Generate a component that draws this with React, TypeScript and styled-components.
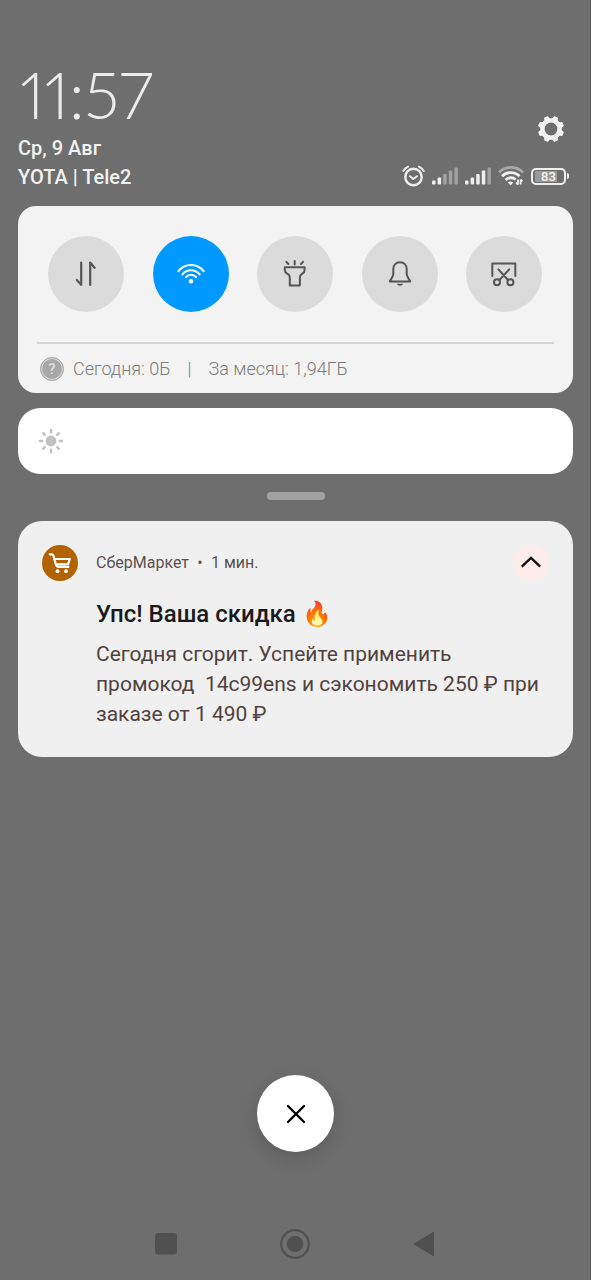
import React from 'react';
import styled, { createGlobalStyle } from 'styled-components';

const GlobalStyle = createGlobalStyle`
  *, *::before, *::after { box-sizing: border-box; }
  body {
    margin: 0;
    background: #6e6e6e;
    font-family: Roboto, "Noto Sans", sans-serif;
  }
  button { padding: 0; border: 0; background: none; font: inherit; cursor: pointer; }
  h2, p { margin: 0; }
  svg { display: block; }
`;

const Screen = styled.div`
  display: flex;
  flex-direction: column;
  min-height: 100vh;
  padding: 64px 17px 0 18px;
  border-right: 1px solid #5c5c5c;
  background: #6e6e6e;
`;

const Header = styled.header`
  display: flex;
  justify-content: space-between;
  align-items: flex-end;
  padding-bottom: 14px;
  color: #f2f2f2;
`;

const HeaderSide = styled.div<{ $end?: boolean }>`
  display: flex;
  flex-direction: column;
  align-items: ${p => (p.$end ? 'flex-end' : 'flex-start')};
`;

const Clock = styled.time`
  margin-bottom: 10px;
  padding-left: 2px;
  font-family: Lato, Roboto, sans-serif;
  font-size: 65px;
  line-height: 60px;
  font-weight: 300;
  font-feature-settings: "pnum";
  color: #ececec;
`;

const HeaderLine = styled.span`
  font-size: 20px;
  line-height: 29px;
  font-weight: 500;
`;

const SettingsButton = styled.button`
  margin: 0 8px 17px 0;
  color: #f2f2f2;
`;

const StatusRow = styled.div`
  display: flex;
  align-items: center;
  gap: 7px;
  height: 32px;
  padding-right: 4px;
`;

const Battery = styled.span`
  display: flex;
  align-items: center;
  gap: 1px;
`;

const BatteryBody = styled.span`
  width: 35px;
  height: 17px;
  border: 2px solid #efefef;
  border-radius: 5px;
  background: linear-gradient(90deg, #9a9a9a 80%, transparent 80%) content-box;
  padding: 1px 2px;
  font-size: 13px;
  line-height: 12px;
  font-weight: 500;
  text-align: center;
`;

const BatteryTip = styled.span`
  width: 2px;
  height: 6px;
  border-radius: 0 2px 2px 0;
  background: #efefef;
`;

const QuickPanel = styled.section`
  border-radius: 18px;
  background: #f3f3f3;
`;

const Tiles = styled.div`
  display: flex;
  justify-content: space-between;
  padding: 30px 31px 30px 30px;
`;

const Tile = styled.button<{ $active?: boolean }>`
  display: grid;
  place-items: center;
  width: 76px;
  height: 76px;
  border-radius: 50%;
  background: ${p => (p.$active ? '#0099ff' : '#dbdbdb')};
  color: ${p => (p.$active ? '#ffffff' : '#555555')};
`;

const DataUsage = styled.div`
  display: flex;
  align-items: center;
  height: 51px;
  margin: 0 19px;
  padding-left: 3px;
  border-top: 2px solid #d6d6d6;
  font-size: 18px;
  line-height: 20px;
  font-weight: 300;
  color: #7c7c7c;
`;

const HelpBadge = styled.button`
  width: 24px;
  height: 24px;
  margin-right: 9px;
  border: 1px solid #a8a8a8;
  border-radius: 50%;
  background: #a8a8a8;
  box-shadow: inset 0 0 0 1px #dcdcdc;
  font-size: 14px;
  line-height: 20px;
  font-weight: 500;
  color: #e0e0e0;
`;

const Separator = styled.span`
  width: 38px;
  text-align: center;
`;

const Brightness = styled.label`
  display: flex;
  align-items: center;
  gap: 16px;
  height: 66px;
  margin-top: 15px;
  padding: 0 20px;
  border-radius: 22px;
  background: #ffffff;
  color: #c1c1c1;
`;

const BrightnessRange = styled.input`
  flex: 1;
  height: 40px;
  margin: 0;
  appearance: none;
  background: transparent;
  &::-webkit-slider-thumb { appearance: none; width: 24px; height: 40px; background: transparent; }
`;

const Handle = styled.div`
  width: 58px;
  height: 8px;
  margin: 18px auto 21px;
  border-radius: 4px;
  background: #a2a2a2;
`;

const Notification = styled.article`
  display: grid;
  grid-template-columns: 36px 1fr;
  column-gap: 18px;
  padding: 24px 20px 28px 24px;
  border-radius: 24px;
  background: #f0f0f0;
`;

const NotificationHead = styled.div`
  display: flex;
  align-items: center;
  height: 36px;
  padding-right: 4px;
  font-size: 16px;
  line-height: 20px;
  color: #5b504e;
`;

const Dot = styled.span`
  width: 22px;
  text-align: center;
`;

const CollapseButton = styled.button`
  display: grid;
  place-items: center;
  width: 36px;
  height: 36px;
  margin-left: auto;
  border-radius: 50%;
  background: #fdecea;
  color: #151010;
`;

const NotificationBody = styled.div`
  grid-column: 2;
`;

const Title = styled.h2`
  margin: 16px 0 8px;
  font-size: 24px;
  line-height: 34px;
  font-weight: 500;
  color: #1a1a1a;
`;

const Message = styled.p`
  font-size: 21px;
  line-height: 30px;
  color: #51423f;
`;

const CloseButton = styled.button`
  display: grid;
  place-items: center;
  width: 77px;
  height: 77px;
  margin: auto auto 0;
  border-radius: 50%;
  background: #ffffff;
  color: #000000;
  box-shadow: 0 6px 18px rgba(0, 0, 0, 0.16);
`;

const NavBar = styled.nav`
  display: flex;
  justify-content: center;
  gap: 97px;
  margin-top: 76px;
  padding: 0 1px 20px 0;
  color: #505050;
`;

const NavButton = styled.button`
  width: 32px;
  height: 32px;
  color: inherit;
`;

const GearIcon = () => (
  <svg width="28" height="28" viewBox="-14 -14 28 28" fill="none" stroke="currentColor">
    <circle r="8.6" strokeWidth="4.4" />
    {[22.5, 67.5, 112.5, 157.5, 202.5, 247.5, 292.5, 337.5].map(a => (
      <path key={a} d="M-2.6 -9.5L-1.7 -12.6H1.7L2.6 -9.5Z" transform={`rotate(${a})`} fill="currentColor" strokeWidth="1" strokeLinejoin="round" />
    ))}
  </svg>
);

const AlarmIcon = () => (
  <svg width="23" height="22" viewBox="0 0 23 22" fill="none" stroke="#efefef" strokeWidth="2" strokeLinecap="round" strokeLinejoin="round">
    <circle cx="11.5" cy="12" r="8.2" strokeWidth="2.4" />
    <path d="M8 11.2L11.2 14L15 11.2" />
    <path d="M1.3 6Q3 3 6 1.6M21.7 6Q20 3 17 1.6" />
  </svg>
);

const SignalIcon = ({ level }: { level: number }) => (
  <svg width="26" height="18" viewBox="0 0 26 18" fill="#efefef">
    {[4, 7, 10.5, 14, 17.2].map((h, i) => (
      <rect key={h} x={i * 5.6} y={17.6 - h} width="3.5" height={h} rx="1" opacity={i < level ? 1 : 0.4} />
    ))}
  </svg>
);

const StatusWifiIcon = () => (
  <svg width="26" height="20" viewBox="0 0 26 20" fill="none" stroke="#efefef" strokeWidth="2.8">
    <path d="M1 6.4A17 17 0 0 1 25 6.4" opacity="0.45" />
    <path d="M4 10.2A12.6 12.6 0 0 1 21.6 10.2" />
    <path d="M7.6 13.9A7.4 7.4 0 0 1 17.6 13.5" />
    <path d="M9.8 16.4Q12.6 14.4 15.4 16.4L12.6 19.4Z" fill="#efefef" stroke="none" />
    <path d="M20 13.4V18.6M18.2 16.6L20 18.6M22.6 18.6V13.4M24.4 15.4L22.6 13.4" strokeWidth="1.8" />
  </svg>
);

const TileIcon = ({ children }: { children: React.ReactNode }) => (
  <svg width="32" height="32" viewBox="0 0 32 32" fill="none" stroke="currentColor" strokeWidth="2" strokeLinecap="round" strokeLinejoin="round">
    {children}
  </svg>
);

const SunIcon = () => (
  <svg width="26" height="26" viewBox="-13 -13 26 26" stroke="currentColor" strokeWidth="2.4" strokeLinecap="round">
    <circle r="5.4" fill="currentColor" stroke="none" />
    {[0, 45, 90, 135, 180, 225, 270, 315].map(a => (
      <path key={a} d="M0 -8.8V-11" transform={`rotate(${a})`} />
    ))}
  </svg>
);

const CartIcon = () => (
  <svg width="36" height="36" viewBox="0 0 36 36" fill="none" stroke="#ffffff" strokeWidth="2.2" strokeLinecap="round" strokeLinejoin="round">
    <circle cx="18" cy="18" r="18" fill="#b36200" stroke="none" />
    <path d="M7.8 9.4H9.4Q11 9.4 11.5 11L14 20Q14.6 21.8 16.4 21.8H26.4" />
    <path d="M12.5 14H27.8L26 19.4H14" />
    <circle cx="15.5" cy="26.2" r="1.9" fill="#ffffff" stroke="none" />
    <circle cx="24" cy="26.2" r="1.9" fill="#ffffff" stroke="none" />
  </svg>
);

const tiles = [
  {
    label: 'Мобильный интернет',
    icon: <path d="M11.2 4.5V26.8L6.8 22M20.2 27V4.5L24.6 9.8" strokeWidth="2.2" />,
  },
  {
    label: 'Wi-Fi',
    active: true,
    icon: (
      <>
        <path d="M3.4 13.2A16 16 0 0 1 28.6 13.2M7.4 16.4A11 11 0 0 1 24.6 16.4M11 19.2A6.5 6.5 0 0 1 21 19.2" />
        <circle cx="16" cy="23.2" r="2.3" fill="currentColor" stroke="none" />
      </>
    ),
  },
  {
    label: 'Фонарик',
    icon: (
      <path d="M5.8 9.2H25.6V12Q25.6 14.4 23.4 15.6Q20.9 17 20.9 19.6V27.6H10.8V19.6Q10.8 17 8.2 15.6Q5.8 14.4 5.8 12ZM15.7 3V6.4M7.4 3.8L9.4 6M24 3.8L22 6" />
    ),
  },
  {
    label: 'Без звука',
    icon: (
      <>
        <path d="M16 4.2C12 4.2 9.3 7.2 9.3 11.2V16C9.3 18.6 7.2 20.6 5.8 23.4H26.2C24.8 20.6 22.7 18.6 22.7 16V11.2C22.7 7.2 20 4.2 16 4.2Z" />
        <path d="M12.8 25.8H19.2Q18.4 27.8 16 27.8T12.8 25.8Z" fill="currentColor" stroke="none" />
      </>
    ),
  },
  {
    label: 'Снимок экрана',
    icon: (
      <>
        <path d="M4.3 18V5.4H27.3V18M10.4 11.4L20 22M21.2 11.4L11.4 22" />
        <circle cx="9" cy="24.3" r="3" />
        <circle cx="22.4" cy="24.3" r="3" />
      </>
    ),
  },
];

const message = 'Сегодня сгорит. Успейте применить промокод \u00a014c99ens и сэкономить 250 ₽ при заказе от 1 490 ₽';

export default function App() {
  return (
    <>
      <GlobalStyle />
      <Screen>
        <Header>
          <HeaderSide>
            <Clock>11:57</Clock>
            <HeaderLine>Ср, 9 Авг</HeaderLine>
            <HeaderLine>YOTA | Tele2</HeaderLine>
          </HeaderSide>
          <HeaderSide $end>
            <SettingsButton aria-label="Настройки">
              <GearIcon />
            </SettingsButton>
            <StatusRow>
              <AlarmIcon />
              <SignalIcon level={2} />
              <SignalIcon level={4} />
              <StatusWifiIcon />
              <Battery>
                <BatteryBody>83</BatteryBody>
                <BatteryTip />
              </Battery>
            </StatusRow>
          </HeaderSide>
        </Header>

        <QuickPanel>
          <Tiles>
            {tiles.map(t => (
              <Tile key={t.label} $active={t.active} aria-label={t.label} aria-pressed={!!t.active}>
                <TileIcon>{t.icon}</TileIcon>
              </Tile>
            ))}
          </Tiles>
          <DataUsage>
            <HelpBadge>?</HelpBadge>
            <span>Сегодня: 0Б</span>
            <Separator>|</Separator>
            <span>За месяц: 1,94ГБ</span>
          </DataUsage>
        </QuickPanel>

        <Brightness>
          <SunIcon />
          <BrightnessRange type="range" min="0" max="100" defaultValue="0" aria-label="Яркость" />
        </Brightness>

        <Handle />

        <Notification>
          <CartIcon />
          <NotificationHead>
            <span>СберМаркет</span>
            <Dot>•</Dot>
            <span>1 мин.</span>
            <CollapseButton aria-label="Свернуть">
              <svg width="24" height="24" viewBox="0 0 24 24" fill="none" stroke="currentColor" strokeWidth="2.4">
                <path d="M2.8 15.6L12 6.8L21.2 15.6" />
              </svg>
            </CollapseButton>
          </NotificationHead>
          <NotificationBody>
            <Title>Упс! Ваша скидка 🔥</Title>
            <Message>{message}</Message>
          </NotificationBody>
        </Notification>

        <CloseButton aria-label="Закрыть">
          <svg width="24" height="24" viewBox="0 0 24 24" fill="none" stroke="currentColor" strokeWidth="2.4" strokeLinecap="round">
            <path d="M4 4L20 20M20 4L4 20" />
          </svg>
        </CloseButton>

        <NavBar>
          <NavButton aria-label="Последние приложения">
            <svg width="32" height="32" viewBox="0 0 32 32" fill="currentColor">
              <rect x="5" y="5" width="22" height="21.5" rx="3.5" />
            </svg>
          </NavButton>
          <NavButton aria-label="Домой">
            <svg width="32" height="32" viewBox="0 0 32 32" fill="none" stroke="currentColor" strokeWidth="2.2">
              <circle cx="16" cy="16" r="13.8" />
              <circle cx="16" cy="16" r="8.2" fill="currentColor" stroke="none" />
            </svg>
          </NavButton>
          <NavButton aria-label="Назад">
            <svg width="32" height="32" viewBox="0 0 32 32" fill="currentColor" stroke="currentColor" strokeLinejoin="round">
              <path d="M25.5 4.2V27.8L6 16Z" />
            </svg>
          </NavButton>
        </NavBar>
      </Screen>
    </>
  );
}
